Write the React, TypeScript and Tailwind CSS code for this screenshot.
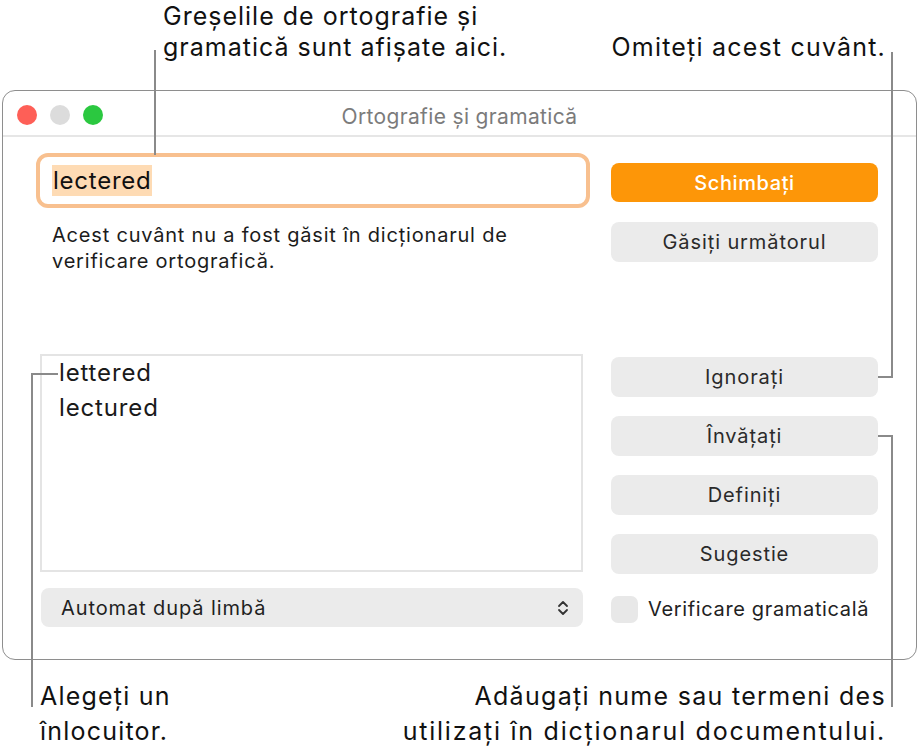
import React from "react";

const font = { fontFamily: "Inter, 'Liberation Sans', sans-serif" };

function ChevronUpDown() {
  return (
    <svg width="12" height="18" viewBox="0 0 12 18" fill="none">
      <path d="M2 7 L6 3 L10 7" stroke="#333" strokeWidth="1.8" strokeLinecap="round" strokeLinejoin="round" />
      <path d="M2 11 L6 15 L10 11" stroke="#333" strokeWidth="1.8" strokeLinecap="round" strokeLinejoin="round" />
    </svg>
  );
}

function Btn({ label, className = "" }: { label: string; className?: string }) {
  return (
    <div
      className={`flex h-[40px] items-center justify-center rounded-[8px] bg-[#ebebeb] text-[20px] tracking-[0.9px] text-[#2a2a2a] ${className}`}
    >
      {label}
    </div>
  );
}

export default function App() {
  return (
    <div className="relative h-[753px] w-[918px] overflow-hidden bg-white text-[#1a1a1a]" style={font}>
      {/* dialog window */}
      <div className="ml-[2px] mt-[90px] flex h-[570px] w-[915px] flex-col overflow-hidden rounded-[13px] border border-[#8e8e8e] bg-white">
        <div className="relative flex h-[46px] items-center border-b-2 border-[#e6e6e6] pl-[14px]">
          <div className="flex gap-[13px] pt-[4px]">
            <span className="h-[20px] w-[20px] rounded-full bg-[#fe5f57]" />
            <span className="h-[20px] w-[20px] rounded-full bg-[#dcdcdc]" />
            <span className="h-[20px] w-[20px] rounded-full bg-[#2bc840]" />
          </div>
          <div className="absolute inset-x-0 top-[10px] text-center text-[21px] tracking-[0.35px] text-[#7b7b7b]">
            Ortografie și gramatică
          </div>
        </div>

        <div className="flex pl-[33px] pr-[38px]">
          {/* left column */}
          <div className="flex w-[554px] flex-col pt-[16px]">
            <div className="flex h-[55px] items-center rounded-[12px] border-[4px] border-[#f8c08f] bg-white pl-[12px]">
              <span className="bg-[#fedbb4] px-[1px] text-[24px] leading-[31px] tracking-[0.75px] text-[#111]">lectered</span>
            </div>
            <p className="mt-[14px] pl-[16px] text-[20px] leading-[26px] tracking-[0.8px] text-[#1c1c1c]">
              Acest cuvânt nu a fost găsit în dicționarul de
              <br />
              verificare ortografică.
            </p>
            <div className="ml-[4px] mt-[80px] h-[218px] w-[543px] border-2 border-[#e4e4e4] bg-white pl-[17px] text-[24px] leading-[35px] tracking-[0.85px] text-[#1a1a1a]">
              <div className="-mt-[1px]">lettered</div>
              <div>lectured</div>
            </div>
            <div className="ml-[5px] mt-[16px] flex h-[39px] w-[542px] items-center justify-between rounded-[8px] bg-[#ebebeb] pl-[20px] pr-[14px] text-[20px] tracking-[0.9px] text-[#1f1f1f]">
              <span>Automat după limbă</span>
              <ChevronUpDown />
            </div>
          </div>

          {/* right column */}
          <div className="ml-[21px] flex w-[267px] flex-col pt-[26px]">
            <div className="flex h-[39px] items-center justify-center rounded-[8px] bg-[#fd9608] text-[20px] font-medium tracking-[0.6px] text-white">
              Schimbați
            </div>
            <Btn label="Găsiți următorul" className="mt-[20px] h-[39px]" />
            <Btn label="Ignorați" className="mt-[95px]" />
            <Btn label="Învățați" className="mt-[19px]" />
            <Btn label="Definiți" className="mt-[19px]" />
            <Btn label="Sugestie" className="mt-[19px]" />
            <div className="mt-[20px] flex items-center gap-[10px]">
              <span className="h-[27px] w-[27px] rounded-[7px] bg-[#e8e8e8]" />
              <span className="text-[20px] tracking-[0.65px] text-[#222]">Verificare gramaticală</span>
            </div>
          </div>
        </div>
      </div>

      {/* callouts */}
      <div className="absolute left-[163px] top-[1px] text-[25px] leading-[31px] tracking-[1px] text-[#111]">
        Greșelile de ortografie și
        <br />
        gramatică sunt afișate aici.
      </div>
      <div className="absolute right-[32px] top-[32px] text-[25px] leading-[31px] tracking-[1.2px] text-[#111]">
        Omiteți acest cuvânt.
      </div>
      <div className="absolute left-[40px] top-[679px] text-[25px] leading-[35px] tracking-[1.2px] text-[#111]">
        Alegeți un
        <br />
        înlocuitor.
      </div>
      <div className="absolute right-[32px] top-[679px] flex flex-col items-end text-[25px] leading-[35px] text-[#111]">
        <span className="tracking-[1.3px]">Adăugați nume sau termeni des</span>
        <span className="tracking-[1.75px]">utilizați în dicționarul documentului.</span>
      </div>

      {/* leader lines */}
      <div className="absolute left-[154px] top-[50px] h-[105px] w-[2px] bg-[#8a8a8a]" />
      <div className="absolute left-[891px] top-[52px] h-[326px] w-[2px] bg-[#8a8a8a]" />
      <div className="absolute left-[878px] top-[376px] h-[2px] w-[15px] bg-[#8a8a8a]" />
      <div className="absolute left-[878px] top-[435px] h-[2px] w-[15px] bg-[#8a8a8a]" />
      <div className="absolute left-[891px] top-[435px] h-[272px] w-[2px] bg-[#8a8a8a]" />
      <div className="absolute left-[31px] top-[373px] h-[2px] w-[27px] bg-[#8a8a8a]" />
      <div className="absolute left-[31px] top-[373px] h-[334px] w-[2px] bg-[#8a8a8a]" />
    </div>
  );
}
